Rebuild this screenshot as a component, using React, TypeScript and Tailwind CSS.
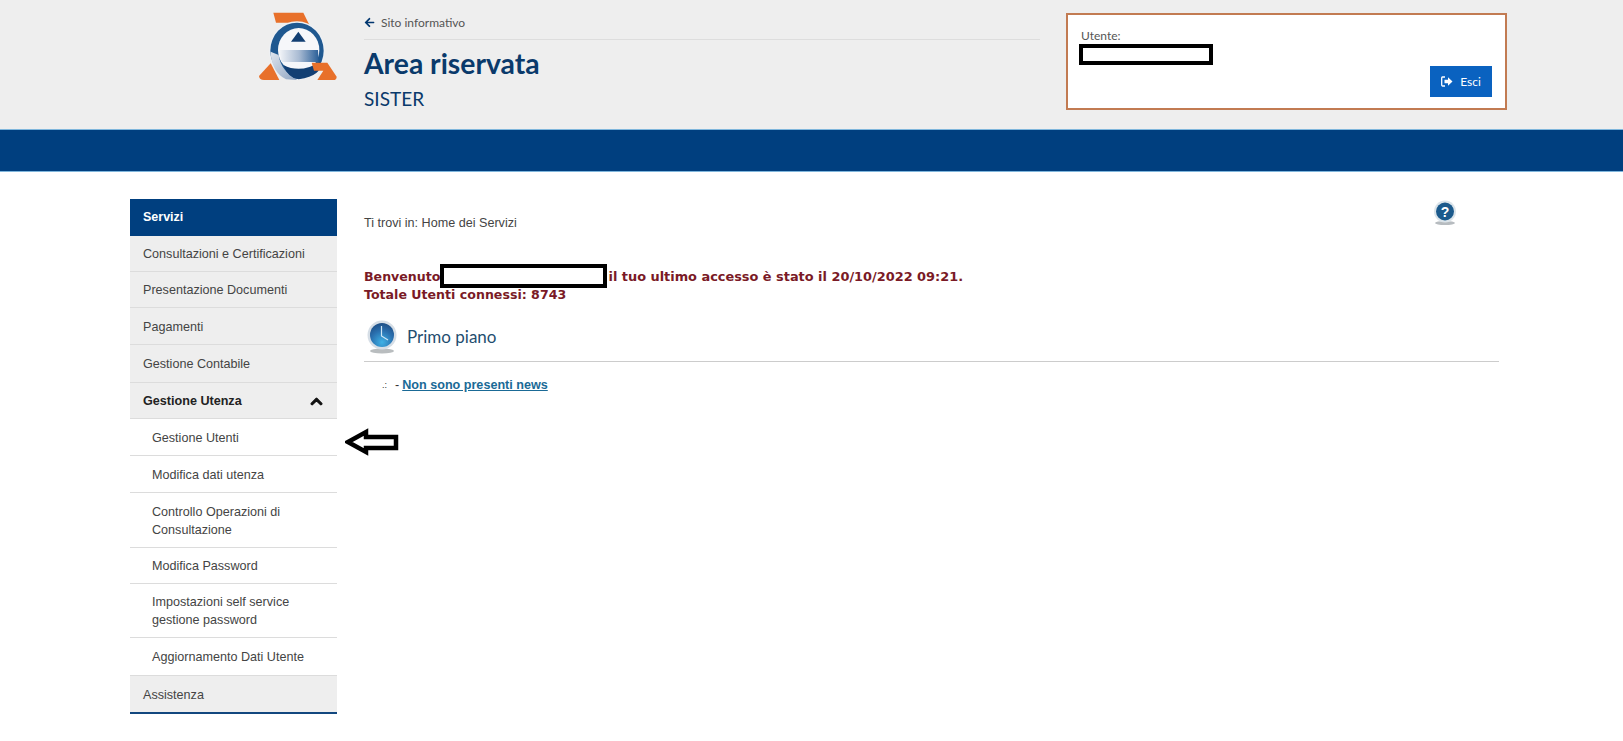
import { FaArrowLeft, FaChevronUp } from "react-icons/fa";

const ui = "font-['Lato',sans-serif]";

function Logo() {
  return (
    <svg width="80" height="70" viewBox="54 36 240 210" className="shrink-0">
      <defs>
        <linearGradient id="eg" x1="0" x2="1" y1="0" y2="0">
          <stop offset="0" stopColor="#f2f4f8" />
          <stop offset="0.5" stopColor="#a9bbd3" />
          <stop offset="1" stopColor="#2a5f98" />
        </linearGradient>
        <linearGradient id="lg" x1="0" x2="1" y1="0" y2="1">
          <stop offset="0" stopColor="#dfe5ee" />
          <stop offset="1" stopColor="#8fa5c2" />
        </linearGradient>
      </defs>
      {/* orange base */}
      <path d="M100 38 H190 L228 115 H200 L165 68 H108 Z" fill="#e8702a" />
      <path d="M57 228 Q58 240 72 240 H118 L92 190 Z" fill="#e8702a" />
      {/* ring */}
      <ellipse cx="171" cy="152" rx="84" ry="88" fill="#eef1f5" />
      <ellipse cx="171" cy="152" rx="80" ry="84" fill="#1f5890" />
      <ellipse cx="176" cy="150" rx="62" ry="66" fill="#f6f7fa" />
      <path d="M175 95 L197 125 H153 Z" fill="#123f73" />
      {/* e */}
      <path d="M118 150 H234 L236 186 H124 Z" fill="url(#eg)" />
      <path d="M92 155 Q94 215 138 238 L172 240 Q122 212 116 165 Z" fill="url(#lg)" />
      <path d="M130 195 Q182 222 240 186 Q250 226 176 238 Q144 234 130 195 Z" fill="#123f73" />
      <path d="M215 188 H262 L290 230 Q290 240 280 240 H232 L250 212 H222 Z" fill="#e8702a" />
    </svg>
  );
}

function ClockIcon() {
  return (
    <svg width="32" height="36" viewBox="0 0 32 36">
      <defs>
        <radialGradient id="cg" cx="0.5" cy="0.8" r="0.8">
          <stop offset="0" stopColor="#3fb2e6" />
          <stop offset="0.6" stopColor="#2a6fae" />
          <stop offset="1" stopColor="#1f4f86" />
        </radialGradient>
      </defs>
      <ellipse cx="16" cy="32" rx="12" ry="2.5" fill="#b9bdbf" />
      <circle cx="16" cy="16" r="14.5" fill="#d6dee6" />
      <circle cx="16" cy="16" r="12" fill="url(#cg)" />
      <path d="M15.5 7 V17 L22 21" stroke="#cfe6f5" strokeWidth="1.2" fill="none" />
    </svg>
  );
}

function HelpIcon() {
  return (
    <svg width="24" height="26" viewBox="0 0 24 26">
      <ellipse cx="12" cy="23" rx="10" ry="2" fill="#b7bcc0" />
      <circle cx="12" cy="11.5" r="11" fill="#dbe4ea" />
      <circle cx="12" cy="11.5" r="9" fill="#1b5a8c" />
      <text x="12" y="16.5" textAnchor="middle" fontSize="14" fontWeight="700" fill="#fff" fontFamily="Liberation Sans, sans-serif">?</text>
    </svg>
  );
}

function ExitIcon() {
  return (
    <svg width="12" height="11" viewBox="0 0 12 11" fill="none">
      <path d="M4 1 H1.5 A1 1 0 0 0 .7 2 V9 A1 1 0 0 0 1.5 10 H4" stroke="#fff" strokeWidth="1.3" />
      <path d="M3.5 3.8 H7 V1.3 L11.5 5.5 L7 9.7 V7.2 H3.5 Z" fill="#fff" />
    </svg>
  );
}

function Redacted({ className }: { className: string }) {
  return <div className={`border-4 border-black bg-white ${className}`} />;
}

const topItems = ["Consultazioni e Certificazioni", "Presentazione Documenti", "Pagamenti", "Gestione Contabile"];
const topHeights = ["h-[36px]", "h-[36px]", "h-[37px]", "h-[38px]"];

const subItems = [
  { label: "Gestione Utenti", h: "h-[37px]" },
  { label: "Modifica dati utenza", h: "h-[37px]" },
  { label: "Controllo Operazioni di Consultazione", h: "h-[55px]" },
  { label: "Modifica Password", h: "h-[36px]" },
  { label: "Impostazioni self service gestione password", h: "h-[54px]" },
  { label: "Aggiornamento Dati Utente", h: "h-[38px]" },
];

function Sidebar() {
  return (
    <nav className="w-[207px] shrink-0 font-['Liberation_Sans',sans-serif] text-[12.6px] text-[#444]">
      <div className="flex h-[37px] items-center bg-[#003f7f] px-[13px] text-[12.5px] font-bold text-white">Servizi</div>
      {topItems.map((item, i) => (
        <div key={item} className={`flex items-center border-b border-[#dcdcdc] bg-[#eeeeee] px-[13px] pt-[2px] ${topHeights[i]}`}>
          {item}
        </div>
      ))}
      <div className="flex h-[36px] items-center justify-between border-b border-[#dcdcdc] bg-[#eeeeee] pt-[2px] pr-[14px] pl-[13px] font-bold text-[#222]">
        Gestione Utenza
        <FaChevronUp size={13} className="stroke-current stroke-[40px] text-[#111]" />
      </div>
      {subItems.map((s) => (
        <div key={s.label} className={`flex items-center border-b border-[#dcdcdc] pt-[1px] pr-[30px] pl-[22px] leading-[18px] ${s.h}`}>
          {s.label}
        </div>
      ))}
      <div className="flex h-[38px] items-center border-b-2 border-[#12477f] bg-[#eeeeee] px-[13px] pt-[2px]">Assistenza</div>
    </nav>
  );
}

export default function App() {
  return (
    <div className="h-[741px] overflow-hidden bg-white">
      {/* HEADER */}
      <header className={`flex h-[129px] bg-[#eeeeee] pl-[258px] ${ui}`}>
        <div className="mt-[12px] mr-[26px]">
          <Logo />
        </div>
        <div className="w-[676px] pt-[13px]">
          <div className="flex h-[27px] items-start gap-[6px] border-b border-[#dddddd] pt-[1px] text-[12px] text-[#555]">
            <FaArrowLeft size={11} className="mt-[3px] text-[#00366f]" />
            Sito informativo
          </div>
          <h1 className="mt-[4px] text-[28.3px] leading-[38px] font-bold text-[#0a3a6b]">Area riservata</h1>
          <div className="mt-[5px] text-[19px] leading-[24px] text-[#0a3a6b]">SISTER</div>
        </div>
        <div className="mt-[13px] ml-[26px] h-[97px] w-[441px] border-2 border-[#c27b52] bg-white pt-[13px] pr-[13px] pl-[13px]">
          <div className="text-[12px] leading-[15px] text-[#555]">Utente:</div>
          <Redacted className="-ml-[2px] mt-[1px] h-[21px] w-[134px]" />
          <div className="mt-[1px] flex justify-end">
            <button className="flex h-[31px] w-[62px] items-center justify-center gap-[7px] bg-[#0a62c0] text-[12px] text-white">
              <ExitIcon />
              Esci
            </button>
          </div>
        </div>
      </header>
      <div className="h-[43px] border-y border-[#7fb6dc] bg-[#003f7f]" />

      {/* MAIN */}
      <main className="flex pt-[27px] pl-[130px]">
        <Sidebar />
        <div className="relative ml-[27px] w-[1135px]">
          <div className="flex h-[40px] items-start justify-between pr-[42px]">
            <p className="pt-[15px] font-['Liberation_Sans',sans-serif] text-[12.6px] text-[#444]">Ti trovi in: Home dei Servizi</p>
            <div className="mt-[1px]"><HelpIcon /></div>
          </div>
          <div className="mt-[25px] font-['DejaVu_Sans',sans-serif] text-[12.6px] leading-[18px] font-bold text-[#7a1a26]">
            <div className="flex items-center">
              <span className="pt-[2px]">Benvenuto</span>
              <Redacted className="mr-[1px] h-[24px] w-[167px]" />
              <span className="pt-[2px] text-[12.9px]">il tuo ultimo accesso è stato il 20/10/2022 09:21.</span>
            </div>
            <div className="-mt-[2px]">Totale Utenti connessi: 8743</div>
          </div>
          <div className={`mt-[10px] flex h-[48px] items-center gap-[9px] border-b border-[#cccccc] pb-[1px] pl-[2px] text-[17px] text-[#1f4e6f] ${ui}`}>
            <ClockIcon />
            Primo piano
          </div>
          <div className="mt-[14px] flex items-center pl-[18px] font-['Liberation_Sans',sans-serif] text-[12.6px] text-[#333]">
            <span className="mr-[8px] text-[9px]">.:</span>
            <span className="mr-[3px]">-</span>
            <a className="font-bold text-[#1a6a96] underline">Non sono presenti news</a>
          </div>
          {/* annotation arrow */}
          <svg width="54" height="28" viewBox="0 0 54 28" className="absolute top-[229px] -left-[19px]">
            <path d="M3 14 L21 4 V9 H51 V20 H21 V24 Z" fill="#fff" stroke="#000" strokeWidth="4.5" />
          </svg>
        </div>
      </main>
    </div>
  );
}
